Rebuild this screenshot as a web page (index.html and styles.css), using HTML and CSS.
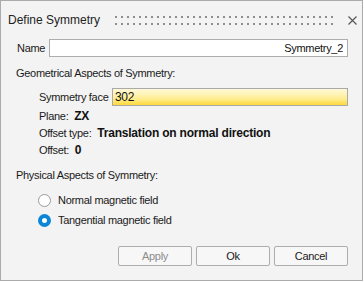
FILE: index.html
```html
<!DOCTYPE html>
<html>
<head>
    <meta charset="UTF-8">
    <title>Define Symmetry</title>
    <link rel="stylesheet" href="styles.css">
</head>
<body>
    <div class="dialog">
        <div class="titlebar">
            <span class="title">Define Symmetry</span>
            <span class="grip"></span>
            <svg class="close" width="9" height="9" viewBox="0 0 9 9">
                <path d="M0.5 0.5 L8.5 8.5 M8.5 0.5 L0.5 8.5" stroke="#555" stroke-width="1.1" fill="none"/>
            </svg>
        </div>

        <div class="row name-row">
            <label>Name</label>
            <input class="field" type="text" value="Symmetry_2">
        </div>

        <div class="section">Geometrical Aspects of Symmetry:</div>

        <div class="row face-row">
            <label>Symmetry face</label>
            <input class="field picked" type="text" value="302">
        </div>

        <div class="info">
            <p>Plane: <b>ZX</b></p>
            <p>Offset type: <b>Translation on normal direction</b></p>
            <p>Offset: <b>0</b></p>
        </div>

        <div class="section">Physical Aspects of Symmetry:</div>

        <div class="radios">
            <div class="radio"><span class="dot"></span>Normal magnetic field</div>
            <div class="radio"><span class="dot on"></span>Tangential magnetic field</div>
        </div>

        <div class="buttons">
            <button disabled>Apply</button>
            <button>Ok</button>
            <button>Cancel</button>
        </div>
    </div>
</body>
</html>
```

FILE: styles.css
```css
body {
    margin: 0;
    background: #ffffff;
    font-family: "Liberation Sans", Arial, sans-serif;
    font-size: 11px;
    letter-spacing: -0.3px;
    color: #1a1a1a;
}
.dialog {
    width: 363px;
    height: 281px;
    box-sizing: border-box;
    border: 1px solid #ababab;
    background: #f3f3f3;
    display: flex;
    flex-direction: column;
    padding: 0 14px 14px 14px;
}
.titlebar {
    height: 38px;
    display: flex;
    align-items: center;
    margin-left: -7px;
    margin-right: -9px;
}
.title {
    font-size: 12px;
    letter-spacing: 0;
    color: #222;
}
.grip {
    flex: 1;
    height: 9px;
    margin: 0 12px 0 15px;
    background-color: #8e8e8e;
    background-image:
        linear-gradient(90deg, transparent 2px, #f3f3f3 2px),
        linear-gradient(transparent 2px, #f3f3f3 2px);
    background-size: 6px 9px, 6px 7px;
}

.row {
    display: flex;
    align-items: center;
    height: 18px;
}
.name-row { padding-left: 2px; }
.name-row label { width: 32px; }
.face-row { margin-top: 8px; padding-left: 24px; }
.face-row label { width: 73px; }
.field {
    flex: 1;
    height: 18px;
    box-sizing: border-box;
    border: 1px solid #adadad;
    background: #ffffff;
    font-family: inherit;
    font-size: 11px;
    letter-spacing: -0.3px;
    color: #111;
    padding: 0 4px;
    margin: 0;
    outline: none;
}
.name-row .field { text-align: right; }
.picked {
    border-color: #a9a9a9;
    background: linear-gradient(#fff8d6 0%, #fff3b4 35%, #ffeb8a 65%, #ffd83a 100%);
    padding-left: 2px;
    font-size: 12px;
}
.section {
    line-height: 14px;
    margin-top: 9px;
    padding-left: 1px;
}
.info {
    margin-top: 2px;
    padding-left: 24px;
}
.info p {
    margin: 0;
    line-height: 17px;
}
.info b {
    font-size: 12px;
    letter-spacing: -0.2px;
    color: #111;
    margin-left: 3px;
}
.radios {
    margin-top: 8px;
    padding-left: 23px;
}
.radio {
    display: flex;
    align-items: center;
    height: 20px;
}
.dot {
    width: 13px;
    height: 13px;
    box-sizing: border-box;
    border: 1px solid #9a9a9a;
    border-radius: 50%;
    background: #fff;
    margin-right: 7px;
}
.dot.on {
    border: 4px solid #0a86d8;
}
.buttons {
    margin-top: auto;
    display: flex;
    justify-content: flex-end;
    gap: 4px;
}
button {
    width: 74px;
    height: 20px;
    border: 1px solid #adadad;
    border-radius: 2px;
    background: #f7f7f7;
    font-family: inherit;
    font-size: 11px;
    letter-spacing: -0.3px;
    color: #1a1a1a;
    padding: 0;
}
button:disabled { color: #8c8c8c; }
```
